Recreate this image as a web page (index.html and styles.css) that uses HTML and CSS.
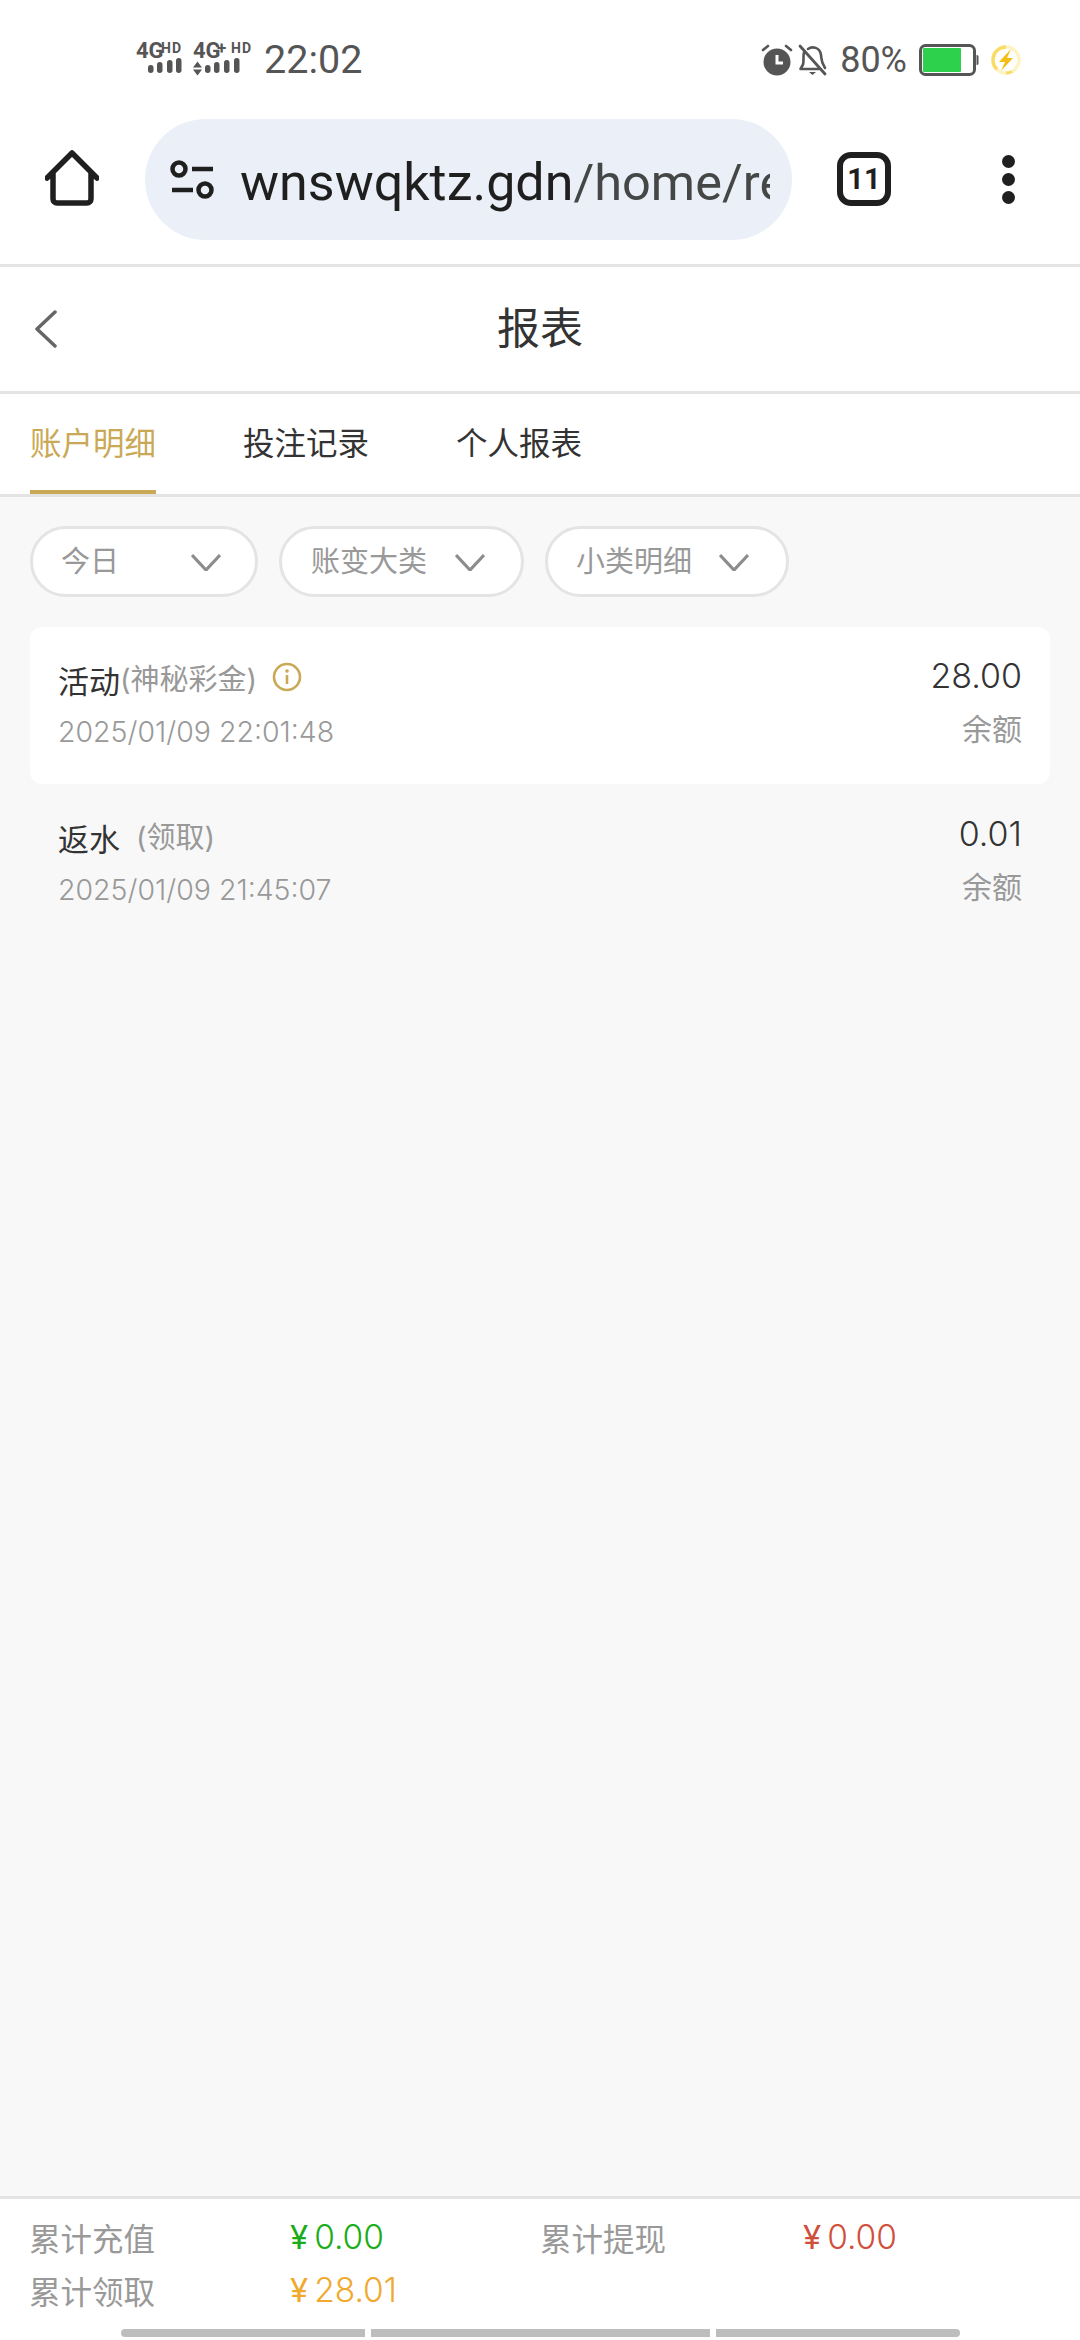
FILE: index.html
```html
<!DOCTYPE html>
<html lang="zh">
<head>
<meta charset="utf-8">
<title>报表</title>
<link rel="stylesheet" href="styles.css">
</head>
<body>
<div class="page">
  <div class="status">
    <div class="status-left">
      <svg class="sig" width="118" height="36" viewBox="0 0 118 36">
        <text x="0" y="16" class="sig-big">4G</text>
        <text x="25" y="11" class="sig-small">HD</text>
        <rect x="12" y="23" width="5.500" height="8" rx="2.700" fill="#555"/>
        <rect x="21" y="20" width="5.500" height="11" rx="2.700" fill="#555"/>
        <rect x="31" y="18" width="5.500" height="13" rx="2.700" fill="#555"/>
        <rect x="40" y="16" width="5.500" height="15" rx="2.700" fill="#555"/>
        <text x="57" y="16" class="sig-big">4G</text>
        <text x="81" y="12" class="sig-plus">+</text>
        <text x="95" y="11" class="sig-small">HD</text>
        <path d="M57 25.500l4.500-6 4.500 6zM57 27.500l4.500 6 4.500-6z" fill="#555"/>
        <rect x="69" y="23" width="5.500" height="8" rx="2.700" fill="#555"/>
        <rect x="78" y="20" width="5.500" height="11" rx="2.700" fill="#555"/>
        <rect x="88" y="18" width="5.500" height="13" rx="2.700" fill="#555"/>
        <rect x="98" y="16" width="5.500" height="15" rx="2.700" fill="#555"/>
      </svg>
      <span class="time">22:02</span>
    </div>
    <div class="status-right">
      <svg width="32" height="32" viewBox="0 0 32 32"><circle cx="16" cy="18" r="13.500" fill="#555"/><path d="M16 11v8h6" fill="none" stroke="#fff" stroke-width="3"/><path d="M2 6l5-4M30 6l-5-4" stroke="#555" stroke-width="2.600" stroke-linecap="round"/></svg>
      <svg class="bell" width="30" height="32" viewBox="0 0 30 32"><path d="M6 8.500C5 11 6 18 5 20.500L2.500 25H21M10 5c4-3 12-2 13 6 .5 4 0 7 4 13" fill="none" stroke="#555" stroke-width="2.600" stroke-linejoin="round" stroke-linecap="round"/><path d="M2 2l25 28" stroke="#555" stroke-width="2.800" stroke-linecap="round"/><path d="M11 28h7l-3.500 3z" fill="#555"/></svg>
      <span class="pct">80%</span>
      <svg class="batt" width="60" height="32" viewBox="0 0 60 32"><rect x="1.500" y="1.500" width="54" height="29" rx="5" fill="#fff" stroke="#555" stroke-width="3"/><rect x="4" y="4" width="38" height="24" rx="1" fill="#2ed14c"/><path d="M57.500 11c2 0 2 1 2 2v6c0 1 0 2-2 2z" fill="#555"/></svg>
      <svg class="bolt" width="32" height="32" viewBox="0 0 32 32"><circle cx="16" cy="16" r="13" fill="#fff" stroke="#fdf3c4" stroke-width="3.500"/><path d="M6.800 25.200A13 13 0 0 1 16 3" fill="none" stroke="#f8dc66" stroke-width="3.500"/><path d="M16 29a13 13 0 0 0 6-1.500" fill="none" stroke="#f8dc66" stroke-width="3"/><path d="M21 5L9 18h6l-4 9 12-13h-6z" fill="#f6bd16"/></svg>
    </div>
  </div>

  <div class="toolbar">
    <svg class="home" width="54" height="56" viewBox="0 0 54 56"><path d="M2 28L27 3l25 25M8 23v26a4 4 0 0 0 4 4h30a4 4 0 0 0 4-4V23" fill="none" stroke="#1f1f1f" stroke-width="5.500" stroke-linecap="round" stroke-linejoin="round"/></svg>
    <div class="pill">
      <svg class="tune" width="44" height="40" viewBox="0 0 44 40"><circle cx="9" cy="9" r="6.500" fill="none" stroke="#1f1f1f" stroke-width="4.500"/><circle cx="35" cy="30" r="6.500" fill="none" stroke="#1f1f1f" stroke-width="4.500"/><path d="M22 9h21M2 30h21" stroke="#1f1f1f" stroke-width="4.500"/></svg>
      <div class="url"><span class="url-host">wnswqktz.gdn</span><span class="url-path">/home/report/index</span></div>
    </div>
    <div class="tabs-count">11</div>
    <div class="dots"><i></i><i></i><i></i></div>
  </div>

  <div class="header">
    <svg class="back" width="24" height="38" viewBox="0 0 24 38"><path d="M21 2L3 19l18 17" fill="none" stroke="#666" stroke-width="3.500" stroke-linecap="round" stroke-linejoin="round"/></svg>
    <h1 class="title">报表</h1>
  </div>

  <div class="tabs">
    <div class="tab active">账户明细</div>
    <div class="tab">投注记录</div>
    <div class="tab">个人报表</div>
  </div>

  <div class="main">
    <div class="filters">
      <div class="filter f1"><span>今日</span><svg width="30" height="18" viewBox="0 0 30 18"><path d="M1 2l14 15L29 2" fill="none" stroke="#8c8c8c" stroke-width="3.200"/></svg></div>
      <div class="filter f2"><span>账变大类</span><svg width="30" height="18" viewBox="0 0 30 18"><path d="M1 2l14 15L29 2" fill="none" stroke="#8c8c8c" stroke-width="3.200"/></svg></div>
      <div class="filter f3"><span>小类明细</span><svg width="30" height="18" viewBox="0 0 30 18"><path d="M1 2l14 15L29 2" fill="none" stroke="#8c8c8c" stroke-width="3.200"/></svg></div>
    </div>

    <div class="row row-on">
      <div class="row-left">
        <div class="row-title"><span class="name">活动</span><span class="sub">(神秘彩金)</span>
          <svg class="info" width="30" height="30" viewBox="0 0 30 30"><circle cx="15" cy="15" r="13" fill="none" stroke="#c9a956" stroke-width="2.600"/><circle cx="15" cy="9" r="1.800" fill="#c9a956"/><path d="M15 13v9" stroke="#c9a956" stroke-width="2.600"/></svg>
        </div>
        <div class="date">2025/01/09 22:01:48</div>
      </div>
      <div class="row-right">
        <div class="amount">28.00</div>
        <div class="bal">余额</div>
      </div>
    </div>

    <div class="row row-next">
      <div class="row-left">
        <div class="row-title"><span class="name">返水</span><span class="sub sub-gap">(领取)</span></div>
        <div class="date">2025/01/09 21:45:07</div>
      </div>
      <div class="row-right">
        <div class="amount">0.01</div>
        <div class="bal">余额</div>
      </div>
    </div>
  </div>

  <div class="footer">
    <div class="totals">
      <span class="lab">累计充值</span><span class="val green"><b>¥</b>0.00</span>
      <span class="lab">累计提现</span><span class="val red"><b>¥</b>0.00</span>
      <span class="lab">累计领取</span><span class="val orange"><b>¥</b>28.01</span>
    </div>
    <div class="scrollbar"><i></i><i></i><i></i></div>
  </div>
</div>
</body>
</html>
```

FILE: styles.css
```css
* { box-sizing: border-box; }
html, body { margin: 0; padding: 0; }
body { font-family: Inter, "Noto Sans CJK SC", sans-serif; color: #333; background: #fff; }
.page { width: 1080px; height: 2340px; display: flex; flex-direction: column; overflow: hidden; }

.status { height: 119px; flex: none; display: flex; align-items: center; justify-content: space-between; padding: 0 58px 0 136px; color: #555; }
.status-left, .status-right { display: flex; align-items: center; }
.sig-big { font: 700 22px Roboto, sans-serif; fill: #555; }
.sig-small { font: 700 14px Roboto, sans-serif; fill: #555; letter-spacing: 1px; }
.sig-plus { font: 700 17px Roboto, sans-serif; fill: #555; }
.time { font: 400 39.500px Roboto, sans-serif; margin-left: 10px; }
.bell { margin-left: 5px; }
.pct { font: 400 36px Roboto, sans-serif; margin-left: 12px; }
.batt { margin-left: 12px; }
.bolt { margin-left: 11px; }

.toolbar { height: 148px; flex: none; display: flex; align-items: flex-start; padding-left: 45px; border-bottom: 3px solid #e4e4e4; }
.home { margin-top: 31px; flex: none; }
.pill { margin-left: 46px; width: 647px; height: 121px; border-radius: 61px; background: #ebf0f8; display: flex; align-items: center; padding-left: 25px; flex: none; }
.tune { flex: none; }
.url { margin-left: 26px; width: 530px; padding-top: 5px; overflow: hidden; white-space: nowrap; font: 400 52px Roboto, sans-serif; }
.url-host { color: #1f1f1f; }
.url-path { color: #444746; font-size: 50.500px; }
.tabs-count { margin: 33px 0 0 45px; width: 54px; height: 54px; border: 6px solid #1f1f1f; border-radius: 14px; display: flex; align-items: center; justify-content: center; font: 700 29px Roboto, sans-serif; color: #1f1f1f; flex: none; }
.dots { margin: 36px 0 0 111px; display: flex; flex-direction: column; gap: 5px; }
.dots i { display: block; width: 13px; height: 13px; border-radius: 50%; background: #1f1f1f; }

.header { height: 127px; flex: none; display: flex; align-items: center; justify-content: center; position: relative; padding-bottom: 8px; border-bottom: 3px solid #e4e4e4; }
.back { position: absolute; left: 34px; top: 43px; }
.title { margin: 0; font-size: 43px; font-weight: 400; color: #333; }

.tabs { height: 103px; flex: none; display: flex; gap: 87px; padding-left: 30px; border-bottom: 3px solid #e4e4e4; }
.tab { height: 100px; padding-top: 27px; line-height: 46px; font-size: 31.500px; color: #333; margin-bottom: -3px; }
.tab.active { color: #c9a956; border-bottom: 4px solid #c9a956; height: 100px; }

.main { flex: 1; background: #f8f8f8; padding: 29px 30px 0; }
.filters { display: flex; gap: 21px; margin-bottom: 30px; }
.filter { height: 71px; background: #fff; border: 3px solid #e4e4e4; border-radius: 36px; display: flex; align-items: center; justify-content: space-between; padding: 0 34px 0 28px; font-size: 29px; color: #999; }
.filter span { line-height: 40px; }
.f1 { width: 228px; }
.f2 { width: 245px; padding: 0 36px 0 29px; }
.f3 { width: 244px; padding-right: 37px; }

.row { height: 157px; padding: 0 28px; display: flex; justify-content: space-between; }
.row-on { background: #fff; border-radius: 12px; }
.row-next { margin-top: 1px; }
.row-left { padding-top: 28px; }
.row-title { display: flex; align-items: center; height: 48px; }
.name { font-size: 31px; color: #333; }
.sub { font-size: 29px; color: #999; margin-top: -4px; }
.sub-gap { margin-left: 16px; }
.info { margin-left: 15px; margin-top: -4px; }
.date { font-size: 28.500px; line-height: 44px; margin-top: 7px; color: #999; font-weight: 300; }
.row-right { padding-top: 27px; text-align: right; }
.amount { font-size: 34px; line-height: 44px; color: #333; font-weight: 300; }
.bal { font-size: 30px; line-height: 44px; margin-top: 9px; color: #999; }

.footer { height: 144px; flex: none; border-top: 3px solid #e4e4e4; display: flex; flex-direction: column; background: #fff; }
.totals { display: grid; grid-template-columns: 261px 250px 263px 1fr; grid-auto-rows: 53px; padding: 11px 0 0 29px; align-items: center; }
.lab { font-size: 31.500px; color: #999; }
.val { font-size: 33.500px; font-weight: 300; }
.val b { font-weight: 400; font-size: 33px; margin-right: 6px; }
.green { color: #1aad19; }
.red { color: #d0503c; }
.orange { color: #f0a92e; }
.scrollbar { margin-top: auto; margin-bottom: 3px; display: flex; gap: 6px; padding-left: 121px; }
.scrollbar i { display: block; height: 8px; background: #bdbdbd; }
.scrollbar i:nth-child(1) { width: 244px; border-radius: 4px 0 0 4px; }
.scrollbar i:nth-child(2) { width: 339px; }
.scrollbar i:nth-child(3) { width: 244px; border-radius: 0 4px 4px 0; }
```
